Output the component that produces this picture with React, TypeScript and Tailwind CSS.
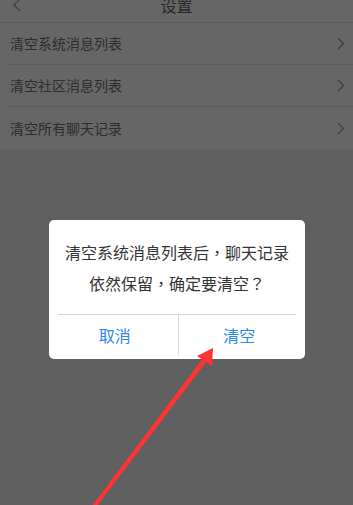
import React from "react";

const rows = ["清空系统消息列表", "清空社区消息列表", "清空所有聊天记录"];

function Chevron() {
  return (
    <svg width="8" height="13" viewBox="0 0 8 13" fill="none">
      <path d="M1 1 L6.5 6.5 L1 12" stroke="#3c3c3c" strokeWidth="1.1" />
    </svg>
  );
}

function P({ children }: { children: React.ReactNode }) {
  return <span style={{ fontFamily: '"Noto Sans CJK TC", sans-serif' }}>{children}</span>;
}

export default function App() {
  return (
    <div
      className="relative w-[353px] h-[505px] overflow-hidden bg-[#5f5f5f]"
      style={{ fontFamily: '"Noto Sans CJK SC", "Noto Sans", sans-serif' }}
    >
      <div className="h-[23px] overflow-hidden bg-[#666666] border-b border-[#5a5a5a]">
        <div className="relative -mt-[12px] h-[34px] flex items-center justify-center">
          <svg className="absolute left-[12px] top-[10px]" width="10" height="14" viewBox="0 0 10 14" fill="none">
            <path d="M8 1 L2 7 L8 13" stroke="#3a3a3a" strokeWidth="1.1" />
          </svg>
          <span className="text-[16px] text-[#262626]">设置</span>
        </div>
      </div>
      <div className="bg-[#666666]">
        {rows.map((r, i) => (
          <div key={r} className="pl-[8px]">
            <div
              className={
                "h-[42px] flex items-center justify-between pl-[2px] pr-[8px] " +
                (i < rows.length - 1 ? "border-b border-[#5b5b5b]" : "")
              }
            >
              <span className="text-[14px] text-[#2c2c2c]">{r}</span>
              <Chevron />
            </div>
          </div>
        ))}
      </div>

      <div className="absolute left-[49px] top-[220px] w-[256px] h-[139px] bg-white rounded-[5px] flex flex-col">
        <div className="h-[94px] flex flex-col items-center justify-center text-[16px] leading-[31px] text-[#333333] pt-[1px]">
          <div>
            清空系统消息列表后<P>，</P>聊天记录
          </div>
          <div>
            依然保留<P>，</P>确定要清空<P>？</P>
          </div>
        </div>
        <div className="mx-[9px] flex-1 border-t border-[#d6d6d6] flex">
          <div className="flex-1 flex items-center justify-center text-[16px] text-[#2a88f0] border-r border-[#d6d6d6] mb-[4px] pr-[6px]">取消</div>
          <div className="flex-1 flex items-center justify-center text-[16px] text-[#2a88f0] mb-[4px] pl-[4px]">清空</div>
        </div>
      </div>

      <svg className="absolute left-0 top-0" width="353" height="505" viewBox="0 0 353 505">
        <polygon points="92,506 97,506 207,361 203,358" fill="#ff3434" />
        <polygon points="213,348 197,356 212,366" fill="#ff3434" />
      </svg>
    </div>
  );
}
